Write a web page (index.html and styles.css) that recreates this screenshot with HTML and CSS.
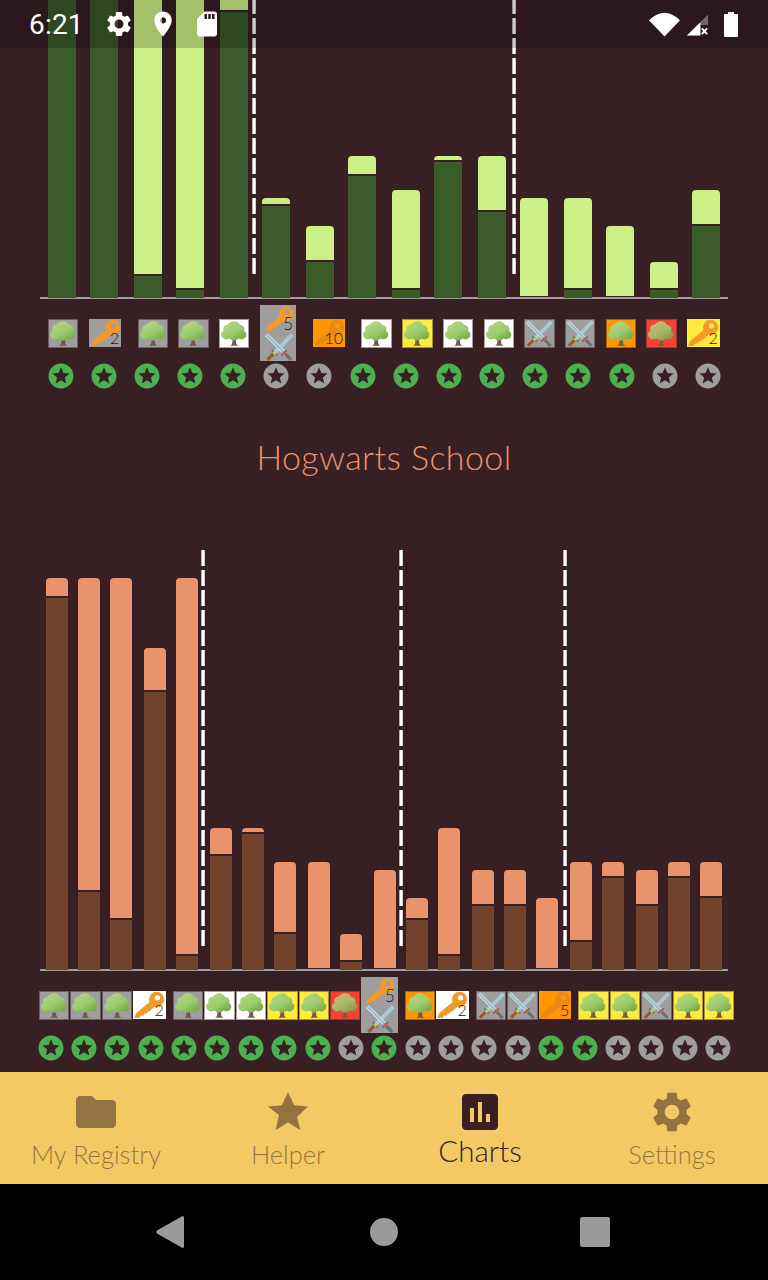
FILE: index.html
```html
<!DOCTYPE html>
<html lang="en">
<head>
<meta charset="utf-8">
<title>Charts</title>
<link rel="stylesheet" href="styles.css">
</head>
<body>
<svg class="sprite" aria-hidden="true">
  <defs>
    <linearGradient id="leaf" x1="0.15" y1="0" x2="0.9" y2="1">
      <stop offset="0" stop-color="#b4d987"/>
      <stop offset="0.55" stop-color="#9ccb6c"/>
      <stop offset="1" stop-color="#6fa044"/>
    </linearGradient>
    <symbol id="tree" viewBox="0 0 30 28">
      <path d="M13.600 18 12.800 24.600Q12.600 26 10.500 27H19.500Q17.400 26 17.200 24.600L16.400 18Z" fill="#79564a"/>
      <path transform="translate(15 11) scale(1.13 1.02) translate(-15 -11)" fill="url(#leaf)" d="M15 1.200c2.600 0 4.600 1.500 5.300 3.600 2.500.1 4.200 2 4.200 4.300 0 .7-.2 1.300-.4 1.900 1.400.9 2.200 2.300 2.200 3.900 0 2.800-2.200 4.900-5 4.900-.9 0-1.700-.2-2.400-.6-.9 1.300-2.400 2.100-4 2.100-1.700 0-3.200-.8-4.100-2.100-.9.5-1.900.8-3 .8-2.900 0-5.100-2.100-5.100-4.800 0-1.800 1-3.300 2.400-4.100-.3-.6-.4-1.200-.4-1.900 0-2.400 1.800-4.200 4.100-4.300C10.300 2.700 12.400 1.200 15 1.200Z"/>
    </symbol>
    <symbol id="key" viewBox="0 0 32 28">
      <path fill="currentColor" d="M17.500 10 3 22 1 27H6L8 24.500H10.500L11.500 22.500H13.500L14.500 20.500H16L22 15Z"/>
      <path fill="currentColor" fill-rule="evenodd" d="M23.300.8a7.600 7.600 0 1 1 0 15.200 7.600 7.600 0 0 1 0-15.200Zm.9 3.400a2.600 2.600 0 1 0 0 5.200 2.600 2.600 0 0 0 0-5.200Z"/>
    </symbol>
    <symbol id="swords" viewBox="0 0 30 28">
      <path d="M28 1.500 11 19" stroke="#a9c9d3" stroke-width="4" fill="none"/>
      <path d="M2 1.500 19.500 19" stroke="#c0dbe3" stroke-width="4" fill="none"/>
      <path d="M2 1.500 19.500 19" stroke="#8fb1bd" stroke-width="1.200" fill="none"/>
      <path d="M7.500 17 13 22.500M17 22.500 23 17" stroke="#77766f" stroke-width="2" fill="none"/>
      <path d="M9 21 3 27" stroke="#9a5a32" stroke-width="3.200" fill="none"/>
      <path d="M21 21 27 27" stroke="#6d6f72" stroke-width="3.200" fill="none"/>
      <circle cx="10.300" cy="19.800" r="1.700" fill="#c6d23a"/>
      <circle cx="19.800" cy="19.800" r="1.700" fill="#e2572b"/>
    </symbol>
    <symbol id="award" viewBox="0 0 24 24">
      <path fill-rule="evenodd" d="M11.990 2C6.470 2 2 6.480 2 12s4.470 10 9.990 10C17.520 22 22 17.520 22 12S17.520 2 11.990 2zm4.240 16L12 15.450 7.770 18l1.120-4.810-3.730-3.230 4.920-.42L12 5l1.920 4.530 4.920.42-3.730 3.230L16.230 18z"/>
    </symbol>
    <symbol id="gear" viewBox="0 0 24 24">
      <path d="M19.140 12.940c.04-.3.06-.61.06-.94 0-.32-.02-.64-.07-.94l2.030-1.580c.18-.14.23-.41.12-.61l-1.920-3.320c-.12-.22-.37-.29-.59-.22l-2.390.96c-.5-.38-1.030-.7-1.620-.94l-.36-2.540c-.04-.24-.24-.41-.48-.41h-3.840c-.24 0-.43.17-.47.41l-.36 2.540c-.59.24-1.130.57-1.620.94l-2.390-.96c-.22-.08-.47 0-.59.22L2.740 8.870c-.12.21-.08.47.12.61l2.030 1.580c-.05.3-.09.63-.09.94s.02.64.07.94l-2.030 1.580c-.18.14-.23.41-.12.61l1.920 3.320c.12.22.37.29.59.22l2.390-.96c.5.38 1.030.7 1.620.94l.36 2.540c.05.24.24.41.48.41h3.840c.24 0 .44-.17.47-.41l.36-2.540c.59-.24 1.130-.56 1.620-.94l2.390.96c.22.08.47 0 .59-.22l1.920-3.320c.12-.22.07-.47-.12-.61l-2.010-1.580zM12 15.600c-1.980 0-3.600-1.620-3.600-3.600s1.620-3.600 3.600-3.600 3.600 1.620 3.600 3.600-1.620 3.600-3.600 3.600z"/>
    </symbol>
  </defs>
</svg>

<div class="status">
  <span class="time">6:21</span>
  <svg class="st-ico"><use href="#gear"/></svg>
  <svg class="st-ico" viewBox="0 0 24 24"><path d="M12 2C8.130 2 5 5.130 5 9c0 5.250 7 13 7 13s7-7.750 7-13c0-3.870-3.130-7-7-7zm0 9.500c-1.380 0-2.500-1.120-2.500-2.500s1.120-2.500 2.500-2.500 2.500 1.120 2.500 2.500-1.120 2.500-2.500 2.500z"/></svg>
  <svg class="st-ico" viewBox="0 0 24 24"><path d="M18 2h-8L4.020 8 4 20c0 1.100.9 2 2 2h12c1.100 0 2-.9 2-2V4c0-1.100-.9-2-2-2zm-6 6h-2V4h2v4zm3 0h-2V4h2v4zm3 0h-2V4h2v4z"/></svg>
  <div class="st-right">
    <svg class="wifi" viewBox="0 0 32 25"><path d="M0 8Q16-7.500 32 8L16 25Z"/></svg>
    <svg class="signal" viewBox="0 0 24 24"><path d="M23 1V12H15V23H1Z" fill="#fff" fill-opacity=".35"/><path d="M15 9V23H1Z"/><path d="M16.500 15.500 22 21.500M22 15.500 16.500 21.500" stroke="#fff" stroke-width="2" fill="none"/></svg>
    <svg class="battery" viewBox="0 0 14 25"><path d="M4 0H10V2H13A1 1 0 0 1 14 3V24A1 1 0 0 1 13 25H1A1 1 0 0 1 0 24V3A1 1 0 0 1 1 2H4Z"/></svg>
  </div>
</div>

<main class="main">
  <section class="chart green c16">
    <div class="bar"><div class="fill" style="height:10px"></div><div class="base" style="height:330px"></div></div>
    <div class="bar"><div class="fill" style="height:10px"></div><div class="base" style="height:330px"></div></div>
    <div class="bar"><div class="fill" style="height:300px"></div><div class="base" style="height:22px"></div></div>
    <div class="bar"><div class="fill" style="height:300px"></div><div class="base" style="height:8px"></div></div>
    <div class="bar"><div class="fill" style="height:30px"></div><div class="base" style="height:286px"></div></div>
    <div class="bar"><div class="fill" style="height:6px"></div><div class="base" style="height:92px"></div></div>
    <div class="bar"><div class="fill" style="height:34px"></div><div class="base" style="height:36px"></div></div>
    <div class="bar"><div class="fill" style="height:18px"></div><div class="base" style="height:122px"></div></div>
    <div class="bar"><div class="fill" style="height:98px"></div><div class="base" style="height:8px"></div></div>
    <div class="bar"><div class="fill" style="height:4px"></div><div class="base" style="height:136px"></div></div>
    <div class="bar"><div class="fill" style="height:54px"></div><div class="base" style="height:86px"></div></div>
    <div class="bar"><div class="fill" style="height:98px"></div><div class="base" style="height:0"></div></div>
    <div class="bar"><div class="fill" style="height:90px"></div><div class="base" style="height:8px"></div></div>
    <div class="bar"><div class="fill" style="height:70px"></div><div class="base" style="height:0"></div></div>
    <div class="bar"><div class="fill" style="height:26px"></div><div class="base" style="height:8px"></div></div>
    <div class="bar"><div class="fill" style="height:34px"></div><div class="base" style="height:72px"></div></div>
    <i class="dash d-a"></i><i class="dash d-b"></i>
  </section>
  <div class="axis"></div>

  <div class="tiles tiles-top">
    <div class="tile gray"><svg><use href="#tree"/></svg></div>
    <div class="tile gray wide"><svg><use href="#key"/></svg><span class="num">2</span></div>
    <div class="tile gray"><svg><use href="#tree"/></svg></div>
    <div class="tile gray"><svg><use href="#tree"/></svg></div>
    <div class="tile white"><svg><use href="#tree"/></svg></div>
    <div class="tile gray stack"><div class="stack-key"><svg><use href="#key"/></svg><span class="num">5</span></div><svg class="stack-sw"><use href="#swords"/></svg></div>
    <div class="tile orange wide"><svg><use href="#key"/></svg><span class="num">10</span></div>
    <div class="tile white"><svg><use href="#tree"/></svg></div>
    <div class="tile yellow"><svg><use href="#tree"/></svg></div>
    <div class="tile white"><svg><use href="#tree"/></svg></div>
    <div class="tile white"><svg><use href="#tree"/></svg></div>
    <div class="tile gray"><svg><use href="#swords"/></svg></div>
    <div class="tile gray"><svg><use href="#swords"/></svg></div>
    <div class="tile orange"><svg><use href="#tree"/></svg></div>
    <div class="tile red"><svg class="dim"><use href="#tree"/></svg></div>
    <div class="tile yellow wide"><svg><use href="#key"/></svg><span class="num">2</span></div>
  </div>

  <div class="stars stars-top">
    <svg class="on"><use href="#award"/></svg><svg class="on"><use href="#award"/></svg><svg class="on"><use href="#award"/></svg><svg class="on"><use href="#award"/></svg><svg class="on"><use href="#award"/></svg><svg class="off"><use href="#award"/></svg><svg class="off"><use href="#award"/></svg><svg class="on"><use href="#award"/></svg><svg class="on"><use href="#award"/></svg><svg class="on"><use href="#award"/></svg><svg class="on"><use href="#award"/></svg><svg class="on"><use href="#award"/></svg><svg class="on"><use href="#award"/></svg><svg class="on"><use href="#award"/></svg><svg class="off"><use href="#award"/></svg><svg class="off"><use href="#award"/></svg>
  </div>

  <h2 class="school">Hogwarts School</h2>

  <section class="chart orange-set c21">
    <div class="bar"><div class="fill" style="height:18px"></div><div class="base" style="height:372px"></div></div>
    <div class="bar"><div class="fill" style="height:312px"></div><div class="base" style="height:78px"></div></div>
    <div class="bar"><div class="fill" style="height:340px"></div><div class="base" style="height:50px"></div></div>
    <div class="bar"><div class="fill" style="height:42px"></div><div class="base" style="height:278px"></div></div>
    <div class="bar"><div class="fill" style="height:376px"></div><div class="base" style="height:14px"></div></div>
    <div class="bar"><div class="fill" style="height:26px"></div><div class="base" style="height:114px"></div></div>
    <div class="bar"><div class="fill" style="height:4px"></div><div class="base" style="height:136px"></div></div>
    <div class="bar"><div class="fill" style="height:70px"></div><div class="base" style="height:36px"></div></div>
    <div class="bar"><div class="fill" style="height:106px"></div><div class="base" style="height:0"></div></div>
    <div class="bar"><div class="fill" style="height:26px"></div><div class="base" style="height:8px"></div></div>
    <div class="bar"><div class="fill" style="height:98px"></div><div class="base" style="height:0"></div></div>
    <div class="bar"><div class="fill" style="height:20px"></div><div class="base" style="height:50px"></div></div>
    <div class="bar"><div class="fill" style="height:126px"></div><div class="base" style="height:14px"></div></div>
    <div class="bar"><div class="fill" style="height:34px"></div><div class="base" style="height:64px"></div></div>
    <div class="bar"><div class="fill" style="height:34px"></div><div class="base" style="height:64px"></div></div>
    <div class="bar"><div class="fill" style="height:70px"></div><div class="base" style="height:0"></div></div>
    <div class="bar"><div class="fill" style="height:78px"></div><div class="base" style="height:28px"></div></div>
    <div class="bar"><div class="fill" style="height:14px"></div><div class="base" style="height:92px"></div></div>
    <div class="bar"><div class="fill" style="height:34px"></div><div class="base" style="height:64px"></div></div>
    <div class="bar"><div class="fill" style="height:14px"></div><div class="base" style="height:92px"></div></div>
    <div class="bar"><div class="fill" style="height:34px"></div><div class="base" style="height:72px"></div></div>
    <i class="dash d-c"></i><i class="dash d-d"></i><i class="dash d-e"></i>
  </section>
  <div class="axis"></div>

  <div class="tiles tiles-bottom">
    <div class="tile gray"><svg><use href="#tree"/></svg></div>
    <div class="tile gray"><svg><use href="#tree"/></svg></div>
    <div class="tile gray"><svg><use href="#tree"/></svg></div>
    <div class="tile white wide"><svg><use href="#key"/></svg><span class="num">2</span></div>
    <div class="tile gray"><svg><use href="#tree"/></svg></div>
    <div class="tile white"><svg><use href="#tree"/></svg></div>
    <div class="tile white"><svg><use href="#tree"/></svg></div>
    <div class="tile yellow"><svg><use href="#tree"/></svg></div>
    <div class="tile yellow"><svg><use href="#tree"/></svg></div>
    <div class="tile red"><svg class="dim"><use href="#tree"/></svg></div>
    <div class="tile gray stack"><div class="stack-key"><svg><use href="#key"/></svg><span class="num">5</span></div><svg class="stack-sw"><use href="#swords"/></svg></div>
    <div class="tile orange"><svg><use href="#tree"/></svg></div>
    <div class="tile white wide"><svg><use href="#key"/></svg><span class="num">2</span></div>
    <div class="tile gray"><svg><use href="#swords"/></svg></div>
    <div class="tile gray"><svg><use href="#swords"/></svg></div>
    <div class="tile orange wide"><svg><use href="#key"/></svg><span class="num">5</span></div>
    <div class="tile yellow"><svg><use href="#tree"/></svg></div>
    <div class="tile yellow"><svg><use href="#tree"/></svg></div>
    <div class="tile gray"><svg><use href="#swords"/></svg></div>
    <div class="tile yellow"><svg><use href="#tree"/></svg></div>
    <div class="tile yellow"><svg><use href="#tree"/></svg></div>
  </div>

  <div class="stars stars-bottom">
    <svg class="on"><use href="#award"/></svg><svg class="on"><use href="#award"/></svg><svg class="on"><use href="#award"/></svg><svg class="on"><use href="#award"/></svg><svg class="on"><use href="#award"/></svg><svg class="on"><use href="#award"/></svg><svg class="on"><use href="#award"/></svg><svg class="on"><use href="#award"/></svg><svg class="on"><use href="#award"/></svg><svg class="off"><use href="#award"/></svg><svg class="on"><use href="#award"/></svg><svg class="off"><use href="#award"/></svg><svg class="off"><use href="#award"/></svg><svg class="off"><use href="#award"/></svg><svg class="off"><use href="#award"/></svg><svg class="on"><use href="#award"/></svg><svg class="on"><use href="#award"/></svg><svg class="off"><use href="#award"/></svg><svg class="off"><use href="#award"/></svg><svg class="off"><use href="#award"/></svg><svg class="off"><use href="#award"/></svg>
  </div>
</main>

<nav class="tabs">
  <div class="tab">
    <svg class="tab-ico" viewBox="0 0 24 24"><path d="M10 4H4c-1.100 0-1.990.9-1.990 2L2 18c0 1.100.9 2 2 2h16c1.100 0 2-.9 2-2V8c0-1.100-.9-2-2-2h-8l-2-2z"/></svg>
    <span class="tab-label">My Registry</span>
  </div>
  <div class="tab">
    <svg class="tab-ico" viewBox="0 0 24 24"><path d="M12 17.270 18.180 21l-1.640-6.530L22 9.240l-6.910-.59L12 2 8.910 8.650 2 9.240l5.460 4.230L5.820 21z"/></svg>
    <span class="tab-label">Helper</span>
  </div>
  <div class="tab active">
    <svg class="tab-ico" viewBox="0 0 24 24"><path d="M19 3H5c-1.100 0-2 .9-2 2v14c0 1.100.9 2 2 2h14c1.100 0 2-.9 2-2V5c0-1.100-.9-2-2-2zM9 17H7v-7h2v7zm4 0h-2V7h2v10zm4 0h-2v-4h2v4z"/></svg>
    <span class="tab-label">Charts</span>
  </div>
  <div class="tab">
    <svg class="tab-ico"><use href="#gear"/></svg>
    <span class="tab-label">Settings</span>
  </div>
</nav>

<div class="sysnav">
  <svg class="back" viewBox="0 0 28 32"><path d="M26 0.300Q28 -.5 28 2V30Q28 32.500 26 31.700L1 17.500Q-.5 16 1 14.500Z"/></svg>
  <span class="home"></span>
  <span class="recent"></span>
</div>
</body>
</html>
```

FILE: styles.css
```css
* { box-sizing: border-box; }
html, body { margin: 0; padding: 0; }
body {
  width: 768px;
  height: 1280px;
  overflow: hidden;
  display: flex;
  flex-direction: column;
  position: relative;
  background: #371f24;
  font-family: "Lato", "Liberation Sans", sans-serif;
}
.sprite { position: absolute; width: 0; height: 0; }

/* status bar lies over the scrolled content */
.status {
  position: absolute;
  top: 0; left: 0; right: 0;
  height: 48px;
  z-index: 5;
  background: rgba(0, 0, 0, .2);
  display: flex;
  align-items: center;
  gap: 14px;
  padding: 0 30px 0 29px;
  color: #fff;
  fill: #fff;
}
.time { font: 400 28px/48px Roboto, sans-serif; width: 61px; margin-top: 2px; letter-spacing: .2px; }
.st-ico { width: 30px; height: 30px; }
.st-right { margin-left: auto; display: flex; align-items: center; gap: 6px; }
.wifi { width: 31px; height: 25px; }
.signal { width: 23px; height: 24px; margin-top: 1px; }
.battery { width: 14px; height: 25px; margin-left: 9px; }

.main { flex: 1; overflow: hidden; min-height: 0; }

/* charts */
.chart {
  position: relative;
  z-index: 1;
  margin: 0 40px;
  display: grid;
  grid-template-rows: 100%;
  align-items: end;
  justify-items: end;
  overflow: hidden;
}
.c16 {
  height: 298px;
  grid-template-columns: 36px repeat(7, 42px 44px) 42px;
}
.c21 {
  height: 420px;
  grid-template-columns: 28px 32px 32px 34px 32px 34px 32px 32px 34px 32px 34px 32px 32px 34px 32px 32px 34px 32px 34px 32px 32px;
}
.bar { display: flex; flex-direction: column; }
.c16 .bar { width: 28px; }
.c21 .bar { width: 22px; }
.fill { border-radius: 4px 4px 0 0; flex: none; }
.base { margin-top: 2px; flex: none; }
.green .fill { background: #cdf086; }
.green .base { background: #3b5b2b; }
.orange-set .fill { background: #e8936b; }
.orange-set .base { background: #72432c; }

.axis { height: 2px; margin: -1px 40px 0; background: #9e9e9e; }

.dash {
  position: absolute;
  top: 0;
  bottom: 24px;
  width: 4px;
  background:
    repeating-linear-gradient(to top, transparent 0 16px, #371f24 16px 20px),
    linear-gradient(to right, #b5b0b1 0 1px, #fff 1px 3px, #cfcbcc 3px 4px);
}
.d-a { left: 212px; }
.d-b { left: 472px; }
.d-c { left: 161px; }
.d-d { left: 359px; }
.d-e { left: 523px; }

/* tiles */
.tiles { display: flex; align-items: center; height: 56px; margin-top: 6px; }
.tiles-top { padding-left: 48px; gap: 10.3px; }
.tiles-bottom { padding-left: 39px; gap: 1px; }
.tile {
  position: relative;
  flex: none;
  width: 30.450px;
  height: 29px;
  border: 1px solid transparent;
  color: #f29a2b;
}
.tile svg { display: block; width: 100%; height: 100%; }
.tile svg.dim { opacity: .86; }
.gray { background: #9e9e9e; border-color: #6e5e61; }
.white { background: #fff; border-color: #a89ea0; }
.yellow { background: #ffeb3b; border-color: #a5933a; }
.orange { background: #ff9800; border-color: #a5620f; color: #e98a17; }
.red { background: #f44336; border-color: #a33630; }
.wide {
  width: 32.500px;
  height: 28px;
  border: 0;
  margin-right: 6px;
}
.tiles-top .wide:last-child { margin-right: 0; }
.stack {
  width: 36.500px;
  height: 56px;
  border: 0;
  margin-right: 6px;
  padding: 0 2px 0 4px;
}
.stack-key { position: relative; height: 28px; }
.stack svg { height: 28px; }
.num {
  position: absolute;
  right: 2px;
  bottom: 0;
  font: 300 16px/18px "Lato", sans-serif;
  color: #1c1416;
}
.stack .num { right: 1px; bottom: 0; font-size: 17px; }

/* award stars */
.stars { display: flex; justify-content: space-between; height: 25px; margin-top: 2px; }
.stars svg { width: 30px; height: 30px; margin: -2.500px; flex: none; }
.stars-top { margin-left: 48px; width: 672.500px; }
.stars-bottom { margin-left: 38px; width: 692.500px; }
.on { fill: #4caf50; }
.off { fill: #9e9e9e; }

.school {
  margin: 49px 0 73px;
  height: 40px;
  font: 300 34px/40px "Lato", sans-serif;
  letter-spacing: .4px;
  color: #e8936b;
  text-align: center;
}

/* bottom tabs */
.tabs {
  flex: none;
  height: 112px;
  background: #f4c862;
  display: grid;
  grid-template-columns: repeat(4, 1fr);
  color: #371f24;
  fill: #371f24;
}
.tab {
  display: flex;
  flex-direction: column;
  align-items: center;
  padding-top: 16px;
}
.tab-ico { width: 48px; height: 48px; flex: none; opacity: .5; }
.tab-label { font: 300 25.500px/36px "Lato", sans-serif; opacity: .5; }
.active .tab-ico { opacity: 1; }
.active .tab-label { opacity: 1; font-size: 29.500px; line-height: 30px; }

/* system nav */
.sysnav {
  flex: none;
  height: 96px;
  background: #000;
  display: grid;
  grid-template-columns: repeat(3, 1fr);
  padding: 0 156px;
  align-items: center;
  fill: #9a9a9a;
}
.back { width: 28px; height: 32px; justify-self: start; }
.home { width: 28px; height: 28px; border-radius: 50%; background: #9a9a9a; justify-self: center; }
.recent { width: 30px; height: 30px; border-radius: 2px; background: #9a9a9a; justify-self: end; margin-right: 2px; }
```
